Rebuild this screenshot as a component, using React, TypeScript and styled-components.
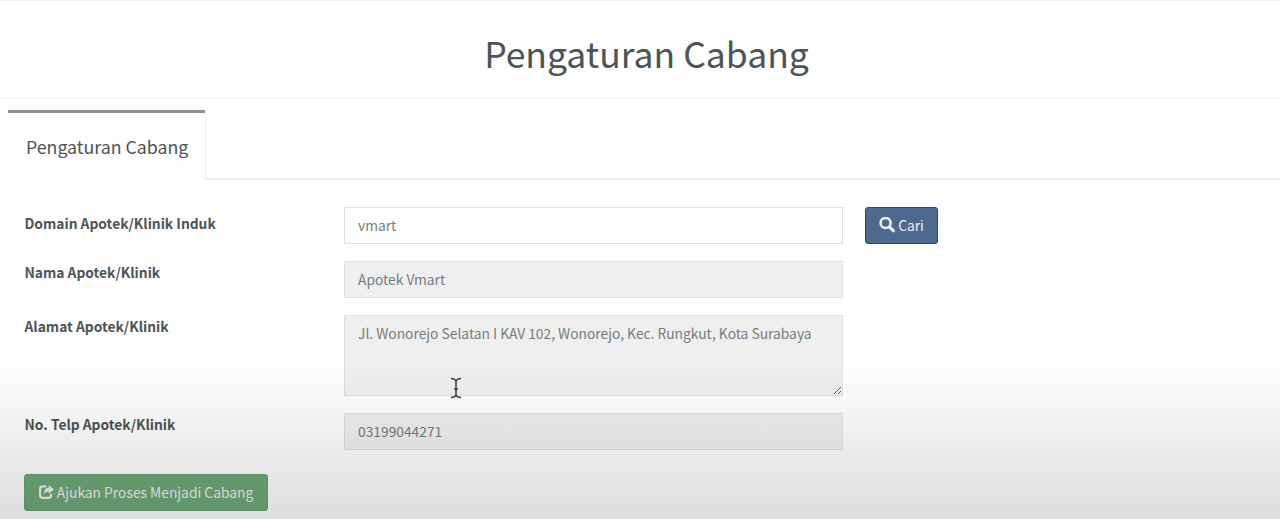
import React from 'react';
import styled, { createGlobalStyle } from 'styled-components';

const colors = {
  text: '#4c5455',
  input: '#747d7d',
  border: '#dfe1e1',
  disabled: '#efefef',
  tabAccent: '#879293',
  primary: '#4c6a90',
  success: '#6ea978',
};

const GlobalStyle = createGlobalStyle`
  *, *::before, *::after {
    box-sizing: border-box;
  }

  body {
    margin: 0;
    overflow: hidden;
    background: #fefefe;
    color: ${colors.text};
    font-family: "Noto Sans CJK SC", "Noto Sans", sans-serif;
    font-size: 13.8px;
    line-height: 20px;
  }
`;

const Page = styled.div`
  position: relative;
  height: 519px;
  overflow: hidden;
  border-top: 1px solid #f3f3f3;
`;

/* Darkens the lower part of the page, above all content */
const BottomShade = styled.div`
  position: absolute;
  left: 0;
  right: 0;
  bottom: 0;
  height: 159px;
  pointer-events: none;
  background: linear-gradient(
    rgba(0, 0, 0, 0) 0%,
    rgba(0, 0, 0, 0.028) 25%,
    rgba(0, 0, 0, 0.08) 60%,
    rgba(0, 0, 0, 0.13) 100%
  );
`;

const Header = styled.header`
  height: 98px;
  padding: 26px 0 0 13px;
  border-bottom: 1px solid #f3f3f3;
  text-align: center;
`;

const Title = styled.h1`
  margin: 0;
  font-size: 35.5px;
  font-weight: 400;
  line-height: 52px;
`;

const TabBar = styled.nav`
  display: flex;
  height: 82px;
  padding: 11px 0 0 8px;
`;

const Tab = styled.a`
  width: 197px;
  padding: 20px 0 0 18px;
  border-top: 3px solid ${colors.tabAccent};
  font-size: 17.75px;
  line-height: 27px;
  white-space: nowrap;
`;

const TabRest = styled.div`
  flex: 1;
  margin-bottom: 1px;
  border-bottom: 2px solid #efefef;
  border-left: 1px solid #f0f0f0;
`;

const Form = styled.form`
  display: flex;
  flex-direction: column;
  gap: 17px;
  padding: 26px 24px 0;
`;

const FormRow = styled.div`
  display: grid;
  grid-template-columns: 320px 499px auto;
  justify-content: start;
  align-items: start;
`;

const Label = styled.label<{ $offset?: number }>`
  padding-top: ${({ $offset = 1 }) => $offset}px;
  padding-left: 0.5px;
  font-weight: 700;
`;

const Input = styled.input`
  display: block;
  width: 499px;
  height: 37px;
  padding: 0 13px 2px;
  border: 1px solid ${colors.border};
  border-radius: 0;
  outline: none;
  background: #fff;
  color: ${colors.input};
  font: inherit;

  &:disabled {
    background: ${colors.disabled};
  }
`;

const TextArea = styled.textarea`
  display: block;
  width: 499px;
  height: 81px;
  padding: 7px 13px;
  border: 1px solid ${colors.border};
  border-radius: 0;
  background: ${colors.disabled};
  color: ${colors.input};
  font: inherit;
  resize: vertical;
`;

const Button = styled.button<{ $variant: 'primary' | 'success' }>`
  display: inline-flex;
  align-items: center;
  justify-content: center;
  gap: 3px;
  width: ${({ $variant }) => ($variant === 'primary' ? 73 : 244)}px;
  height: 37px;
  padding: 0 0 1px;
  border: 1px solid ${({ $variant }) => ($variant === 'primary' ? '#3c4650' : '#6ba275')};
  border-radius: 3px;
  background: ${({ $variant }) => colors[$variant]};
  color: #eef0ee;
  font: inherit;
  white-space: nowrap;
`;

const SearchButton = styled(Button)`
  margin-left: 22px;
`;

const Actions = styled.div`
  display: flex;
  padding-top: 7px;
`;

const Pointer = styled.svg`
  position: absolute;
  left: 450px;
  top: 376px;
`;

const SearchIcon = () => (
  <svg width="16" height="16" viewBox="0 0 16 16" fill="none" stroke="currentColor">
    <circle cx="6.6" cy="6" r="5" strokeWidth="2.5" />
    <path d="M10.4 9.9 14.3 13.7" strokeWidth="3.2" strokeLinecap="round" />
  </svg>
);

const ShareIcon = () => (
  <svg width="15" height="15" viewBox="0 0 15 15" fill="none">
    <path
      d="M7.2 1.4H3.8Q1.1 1.4 1.1 4.1V10.2Q1.1 12.9 3.8 12.9H9.4Q12.1 12.9 12.1 10.2V9"
      stroke="currentColor"
      strokeWidth="2.2"
    />
    <path
      d="M9.8 0 15 4.4 9.8 8.8V6.4C7.5 6.3 6.2 7.1 4.8 9.2 4.9 5.3 6.4 2.8 9.8 2.5Z"
      fill="currentColor"
    />
  </svg>
);

const App: React.FC = () => (
  <>
    <GlobalStyle />
    <Page>
      <Header>
        <Title>Pengaturan Cabang</Title>
      </Header>

      <TabBar>
        <Tab>Pengaturan Cabang</Tab>
        <TabRest />
      </TabBar>

      <Form>
        <FormRow>
          <Label $offset={6} htmlFor="domain">Domain Apotek/Klinik Induk</Label>
          <Input id="domain" defaultValue="vmart" />
          <SearchButton type="button" $variant="primary">
            <SearchIcon />
            Cari
          </SearchButton>
        </FormRow>
        <FormRow>
          <Label htmlFor="name">Nama Apotek/Klinik</Label>
          <Input id="name" defaultValue="Apotek Vmart" disabled />
        </FormRow>
        <FormRow>
          <Label htmlFor="address">Alamat Apotek/Klinik</Label>
          <TextArea
            id="address"
            defaultValue="Jl. Wonorejo Selatan I KAV 102, Wonorejo, Kec. Rungkut, Kota Surabaya"
            disabled
          />
        </FormRow>
        <FormRow>
          <Label htmlFor="phone">No. Telp Apotek/Klinik</Label>
          <Input id="phone" defaultValue="03199044271" disabled />
        </FormRow>
        <Actions>
          <Button type="button" $variant="success">
            <ShareIcon />
            Ajukan Proses Menjadi Cabang
          </Button>
        </Actions>
      </Form>

      <BottomShade />
      <Pointer width="12" height="22" viewBox="0 0 12 22" fill="none" stroke="#3f4545" strokeWidth="1.6">
        <path d="M1 1.5Q5 1.5 6 4Q7 1.5 11 1.5M6 4V18M1 20.5Q5 20.5 6 18Q7 20.5 11 20.5M4 12H8" />
      </Pointer>
    </Page>
  </>
);

export default App;
